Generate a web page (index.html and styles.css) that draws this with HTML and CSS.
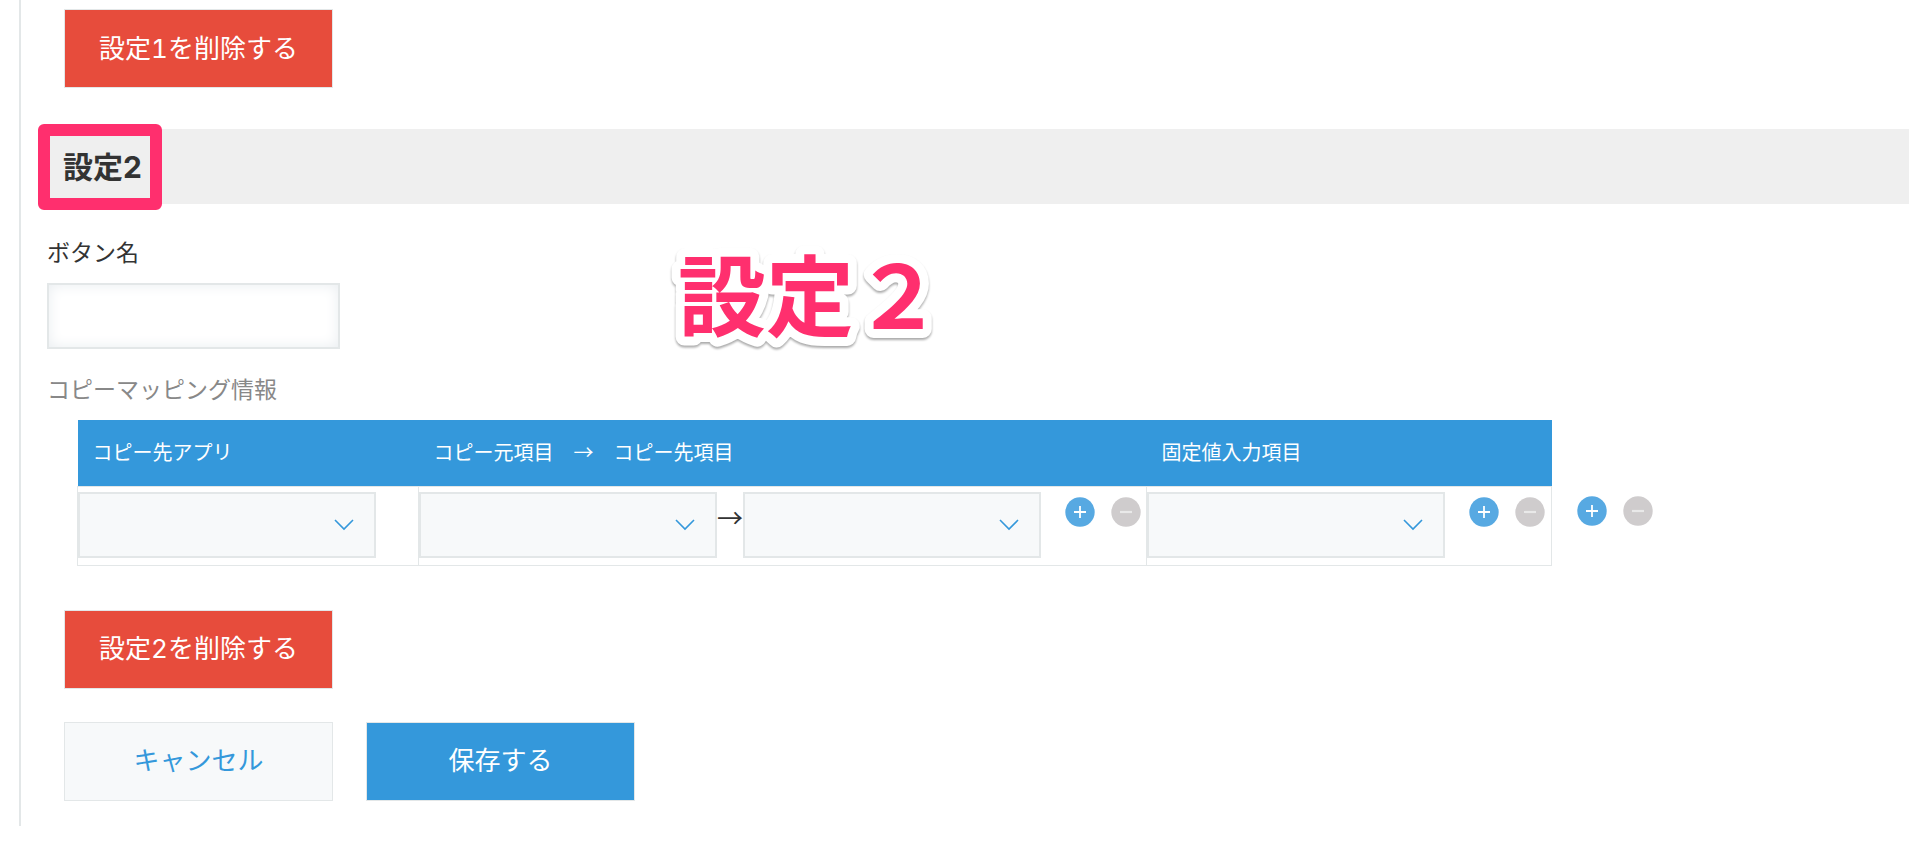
FILE: index.html
```html
<!DOCTYPE html>
<html lang="ja">
<head>
<meta charset="utf-8">
<title>設定2</title>
<link rel="stylesheet" href="styles.css">
</head>
<body>
<svg class="sprite" aria-hidden="true">
  <symbol id="chevron" viewBox="0 0 20 12"><path d="M1 1l9 9 9-9" fill="none" stroke="#3498db" stroke-width="1.6"/></symbol>
  <symbol id="plus" viewBox="0 0 30 30"><circle cx="15" cy="15" r="14.7" fill="#57a9e2"/><path d="M9 15h12M15 9v12" stroke="#fff" stroke-width="1.8"/></symbol>
  <symbol id="minus" viewBox="0 0 30 30"><circle cx="15" cy="15" r="14.7" fill="#cfcccd"/><path d="M9 15h12" stroke="#e9e9e9" stroke-width="2.2"/></symbol>
</svg>
<main class="settings">
  <button class="btn btn-danger" type="button">設定1を削除する</button>

  <section class="setting">
    <h2 class="setting-title"><span class="marked">設定2</span></h2>
    <svg class="callout" viewBox="0 0 320 140"><text x="18" y="105">設定２</text></svg>

    <label class="label" for="button-name">ボタン名</label>
    <input class="text-input" id="button-name" type="text">

    <h3 class="mapping-title">コピーマッピング情報</h3>
    <table class="mapping">
      <thead>
        <tr>
          <th class="col-app">コピー先アプリ</th>
          <th class="col-fields">コピー元項目　→　コピー先項目</th>
          <th class="col-fixed">固定値入力項目</th>
        </tr>
      </thead>
      <tbody>
        <tr>
          <td>
            <div class="cell">
              <span class="select-box"><select class="select" aria-label="コピー先アプリ"></select><svg class="chevron"><use href="#chevron"/></svg></span>
            </div>
          </td>
          <td>
            <div class="cell">
              <span class="select-box"><select class="select" aria-label="コピー元項目"></select><svg class="chevron"><use href="#chevron"/></svg></span>
              <span class="arrow">→</span>
              <span class="select-box"><select class="select" aria-label="コピー先項目"></select><svg class="chevron"><use href="#chevron"/></svg></span>
              <span class="row-tools">
                <button class="round" type="button" aria-label="項目を追加"><svg><use href="#plus"/></svg></button>
                <button class="round" type="button" aria-label="項目を削除"><svg><use href="#minus"/></svg></button>
              </span>
            </div>
          </td>
          <td>
            <div class="cell">
              <span class="select-box"><select class="select" aria-label="固定値入力項目"></select><svg class="chevron"><use href="#chevron"/></svg></span>
              <span class="row-tools">
                <button class="round" type="button" aria-label="固定値を追加"><svg><use href="#plus"/></svg></button>
                <button class="round" type="button" aria-label="固定値を削除"><svg><use href="#minus"/></svg></button>
              </span>
            </div>
          </td>
          <td class="outside">
            <div class="cell">
              <span class="row-tools">
                <button class="round" type="button" aria-label="行を追加"><svg><use href="#plus"/></svg></button>
                <button class="round" type="button" aria-label="行を削除"><svg><use href="#minus"/></svg></button>
              </span>
            </div>
          </td>
        </tr>
      </tbody>
    </table>

    <button class="btn btn-danger" type="button">設定2を削除する</button>
  </section>

  <div class="actions">
    <button class="btn btn-plain" type="button">キャンセル</button>
    <button class="btn btn-primary" type="submit">保存する</button>
  </div>
</main>
</body>
</html>
```
FILE: styles.css
```css
* {
  box-sizing: border-box;
}

body {
  margin: 0;
  background: #fff;
  color: #333;
  font-family: "Noto Sans CJK JP", "Noto Sans", sans-serif;
}

button,
input,
select {
  font: inherit;
}

.sprite {
  display: none;
}

.settings {
  margin-left: 19px;
  padding: 9px 11px 25px 26px;
  border-left: 2px solid #e3e7e8;
}

.btn {
  display: block;
  width: 269px;
  height: 79px;
  margin-left: 17px;
  padding: 0;
  border: 1px solid #e3e7e8;
  font-family: Inter, "Noto Sans CJK JP", sans-serif;
  font-size: 26px;
  font-variant-numeric: tabular-nums;
  line-height: 36px;
}

.btn-danger {
  background: #e74c3c;
  color: #fff;
}

.btn-primary {
  background: #3498db;
  color: #fff;
}

.btn-plain {
  background: #f7f9fa;
  color: #3498db;
}

.setting {
  position: relative;
}

.setting-title {
  display: flex;
  align-items: center;
  height: 75px;
  margin: 41px 0 32px;
  padding-left: 16px;
  background: #efefef;
  font-family: Inter, "Noto Sans CJK JP", sans-serif;
  font-size: 30px;
  line-height: 40px;
}

.marked {
  position: relative;
}

.marked::after {
  content: "";
  position: absolute;
  inset: -23px -20px -23px -25px;
  border: 12px solid #ff2f6e;
  border-radius: 6px;
}

.callout {
  position: absolute;
  top: 95px;
  left: 613px;
  width: 320px;
  height: 140px;
  fill: #ff2f6e;
  stroke: #fff;
  stroke-width: 18px;
  stroke-linejoin: round;
  paint-order: stroke fill;
  font-size: 88px;
  font-weight: 700;
  filter: drop-shadow(0 2px 1px #aaa);
}

.label {
  display: block;
  margin-bottom: 17px;
  font-size: 23px;
  line-height: 30px;
}

.text-input {
  display: block;
  width: 293px;
  height: 66px;
  padding: 0 16px;
  border: 2px solid #e3e7e8;
  background: #fff;
  box-shadow: inset 0 0 14px #e9edf0;
  font-size: 23px;
}

.mapping-title {
  margin: 24px 0 17px;
  color: #888;
  font-size: 23px;
  font-weight: 400;
  line-height: 30px;
}

.mapping {
  margin: 0 0 44px 30px;
  border-collapse: collapse;
}

.mapping th {
  height: 66px;
  padding: 0 15px 2px;
  background: #3498db;
  color: #fff;
  font-size: 20px;
  font-weight: 400;
  text-align: left;
}

.mapping td {
  padding: 5px 0 7px;
  border: 1px solid #e3e7e8;
  vertical-align: top;
}

.mapping .outside {
  border-width: 0;
  padding-left: 1px;
}

.col-app {
  width: 341px;
}

.col-fields {
  width: 728px;
}

.col-fixed {
  width: 405px;
}

.cell {
  display: flex;
  align-items: flex-start;
}

.select-box {
  display: grid;
  align-items: center;
  justify-items: end;
}

.select-box > * {
  grid-area: 1 / 1;
}

.select {
  width: 298px;
  height: 66px;
  border: 2px solid #e3e7e8;
  border-radius: 0;
  background: #f7f9fa;
  appearance: none;
}

.chevron {
  width: 20px;
  height: 12px;
  margin-right: 22px;
  pointer-events: none;
}

.arrow {
  width: 26px;
  font-size: 26px;
  line-height: 50px;
  text-align: center;
}

.row-tools {
  display: flex;
  gap: 16px;
  padding: 5px 5px 0 24px;
}

.round {
  display: block;
  width: 30px;
  height: 30px;
  padding: 0;
  border: 0;
  background: none;
}

.round svg {
  display: block;
  width: 30px;
  height: 30px;
}

.actions {
  display: flex;
  gap: 16px;
  margin-top: 33px;
}
```
